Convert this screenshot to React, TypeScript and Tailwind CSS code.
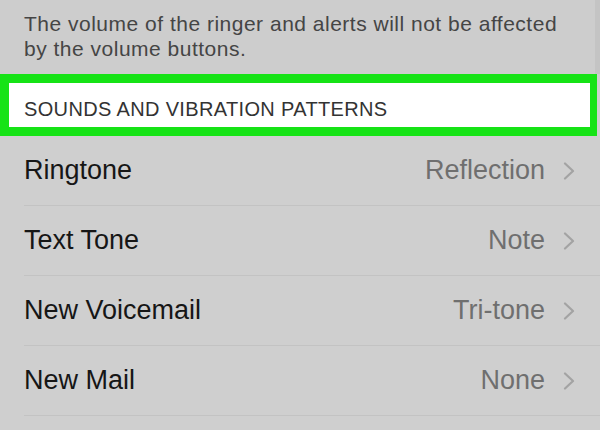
import React from "react";

const rows = [
  { label: "Ringtone", value: "Reflection" },
  { label: "Text Tone", value: "Note" },
  { label: "New Voicemail", value: "Tri-tone" },
  { label: "New Mail", value: "None" },
];

function Chevron() {
  return (
    <svg width="12" height="18" viewBox="0 0 12 18" className="shrink-0">
      <path d="M2 1.5 L10 9 L2 16.5" fill="none" stroke="#a3a3a3" strokeWidth="2.2" strokeLinecap="round" strokeLinejoin="round" />
    </svg>
  );
}

export default function App() {
  return (
    <div
      className="w-[600px] h-[430px] overflow-hidden bg-[#cfcfcf] flex flex-col"
      style={{ fontFamily: '"Liberation Sans", Arial, sans-serif' }}
    >
      <div className="h-[74px] shrink-0 bg-[#cdcdcd] pl-[24px] pt-[11px] border-r-[5px] border-[#c4c4c4]">
        <p className="text-[21px] leading-[25px] tracking-[0.5px] text-[#454545] whitespace-nowrap">
          The volume of the ringer and alerts will not be affected
          <br />
          by the volume buttons.
        </p>
      </div>
      <div className="h-[62px] w-[597px] shrink-0 border-[#16e316] border-t-[9px] border-l-[9px] border-b-[9px] border-r-[7px] bg-white flex items-center pl-[15px] pt-[8px]">
        <span className="text-[20px] leading-[20px] tracking-[0.35px] text-[#333333]">SOUNDS AND VIBRATION PATTERNS</span>
      </div>
      {rows.map((r) => (
        <div key={r.label} className="h-[70px] shrink-0 pl-[24px]">
          <div className="h-full flex items-center border-b border-[#c3c3c3] pr-[25px]">
            <span className="text-[27px] text-[#161616] flex-1">{r.label}</span>
            <span className="text-[27px] text-[#6f6f6f]">{r.value}</span>
            <span className="ml-[18px] flex items-center">
              <Chevron />
            </span>
          </div>
        </div>
      ))}
    </div>
  );
}
